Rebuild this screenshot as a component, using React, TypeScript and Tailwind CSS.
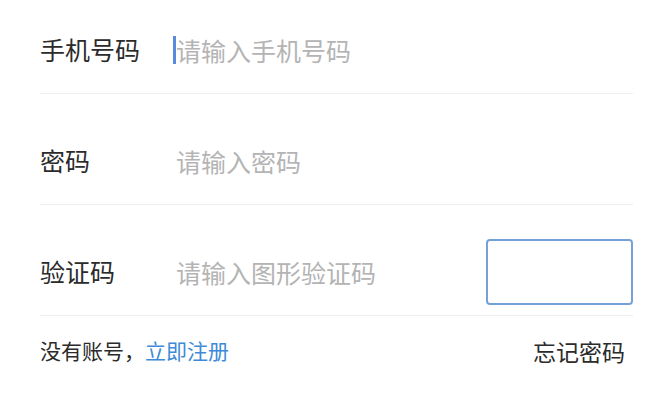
import React from "react";

const fields = [
  { label: "手机号码", placeholder: "请输入手机号码", caret: true },
  { label: "密码", placeholder: "请输入密码" },
  { label: "验证码", placeholder: "请输入图形验证码", captcha: true },
];

export default function App() {
  return (
    <div
      className="w-[670px] h-[415px] bg-white overflow-hidden pl-10 pr-[37px] pt-[6px]"
      style={{ fontFamily: '"Noto Sans CJK SC", "Noto Sans", sans-serif' }}
    >
      {fields.map((f, i) => (
        <div
          key={f.label}
          className={`flex items-center h-[88px] border-b border-[#eceef2] ${i > 0 ? "mt-[23px]" : ""}`}
        >
          <span className="w-[136px] shrink-0 text-[25px] leading-none text-[#2b2b2b]">{f.label}</span>
          <div className="relative flex-1 flex items-center">
            {f.caret && (
              <span className="absolute left-[-3px] top-1/2 -translate-y-1/2 w-[3px] h-[28px] bg-[#5a8ada]" />
            )}
            <input
              className="w-full bg-transparent outline-none text-[25px] leading-none text-[#333] placeholder:text-[#b4b4b4]"
              placeholder={f.placeholder}
            />
          </div>
          {f.captcha && (
            <div className="w-[147px] h-[66px] shrink-0 rounded-[4px] border-2 border-[#75a0d9]" />
          )}
        </div>
      ))}
      <div className="flex items-center justify-between h-[70px] pr-[8px]">
        <span className="text-[21px] text-[#2b2b2b]">
          没有账号，<span className="text-[#3d8ad8]">立即注册</span>
        </span>
        <span className="text-[23px] text-[#2b2b2b]">忘记密码</span>
      </div>
    </div>
  );
}
